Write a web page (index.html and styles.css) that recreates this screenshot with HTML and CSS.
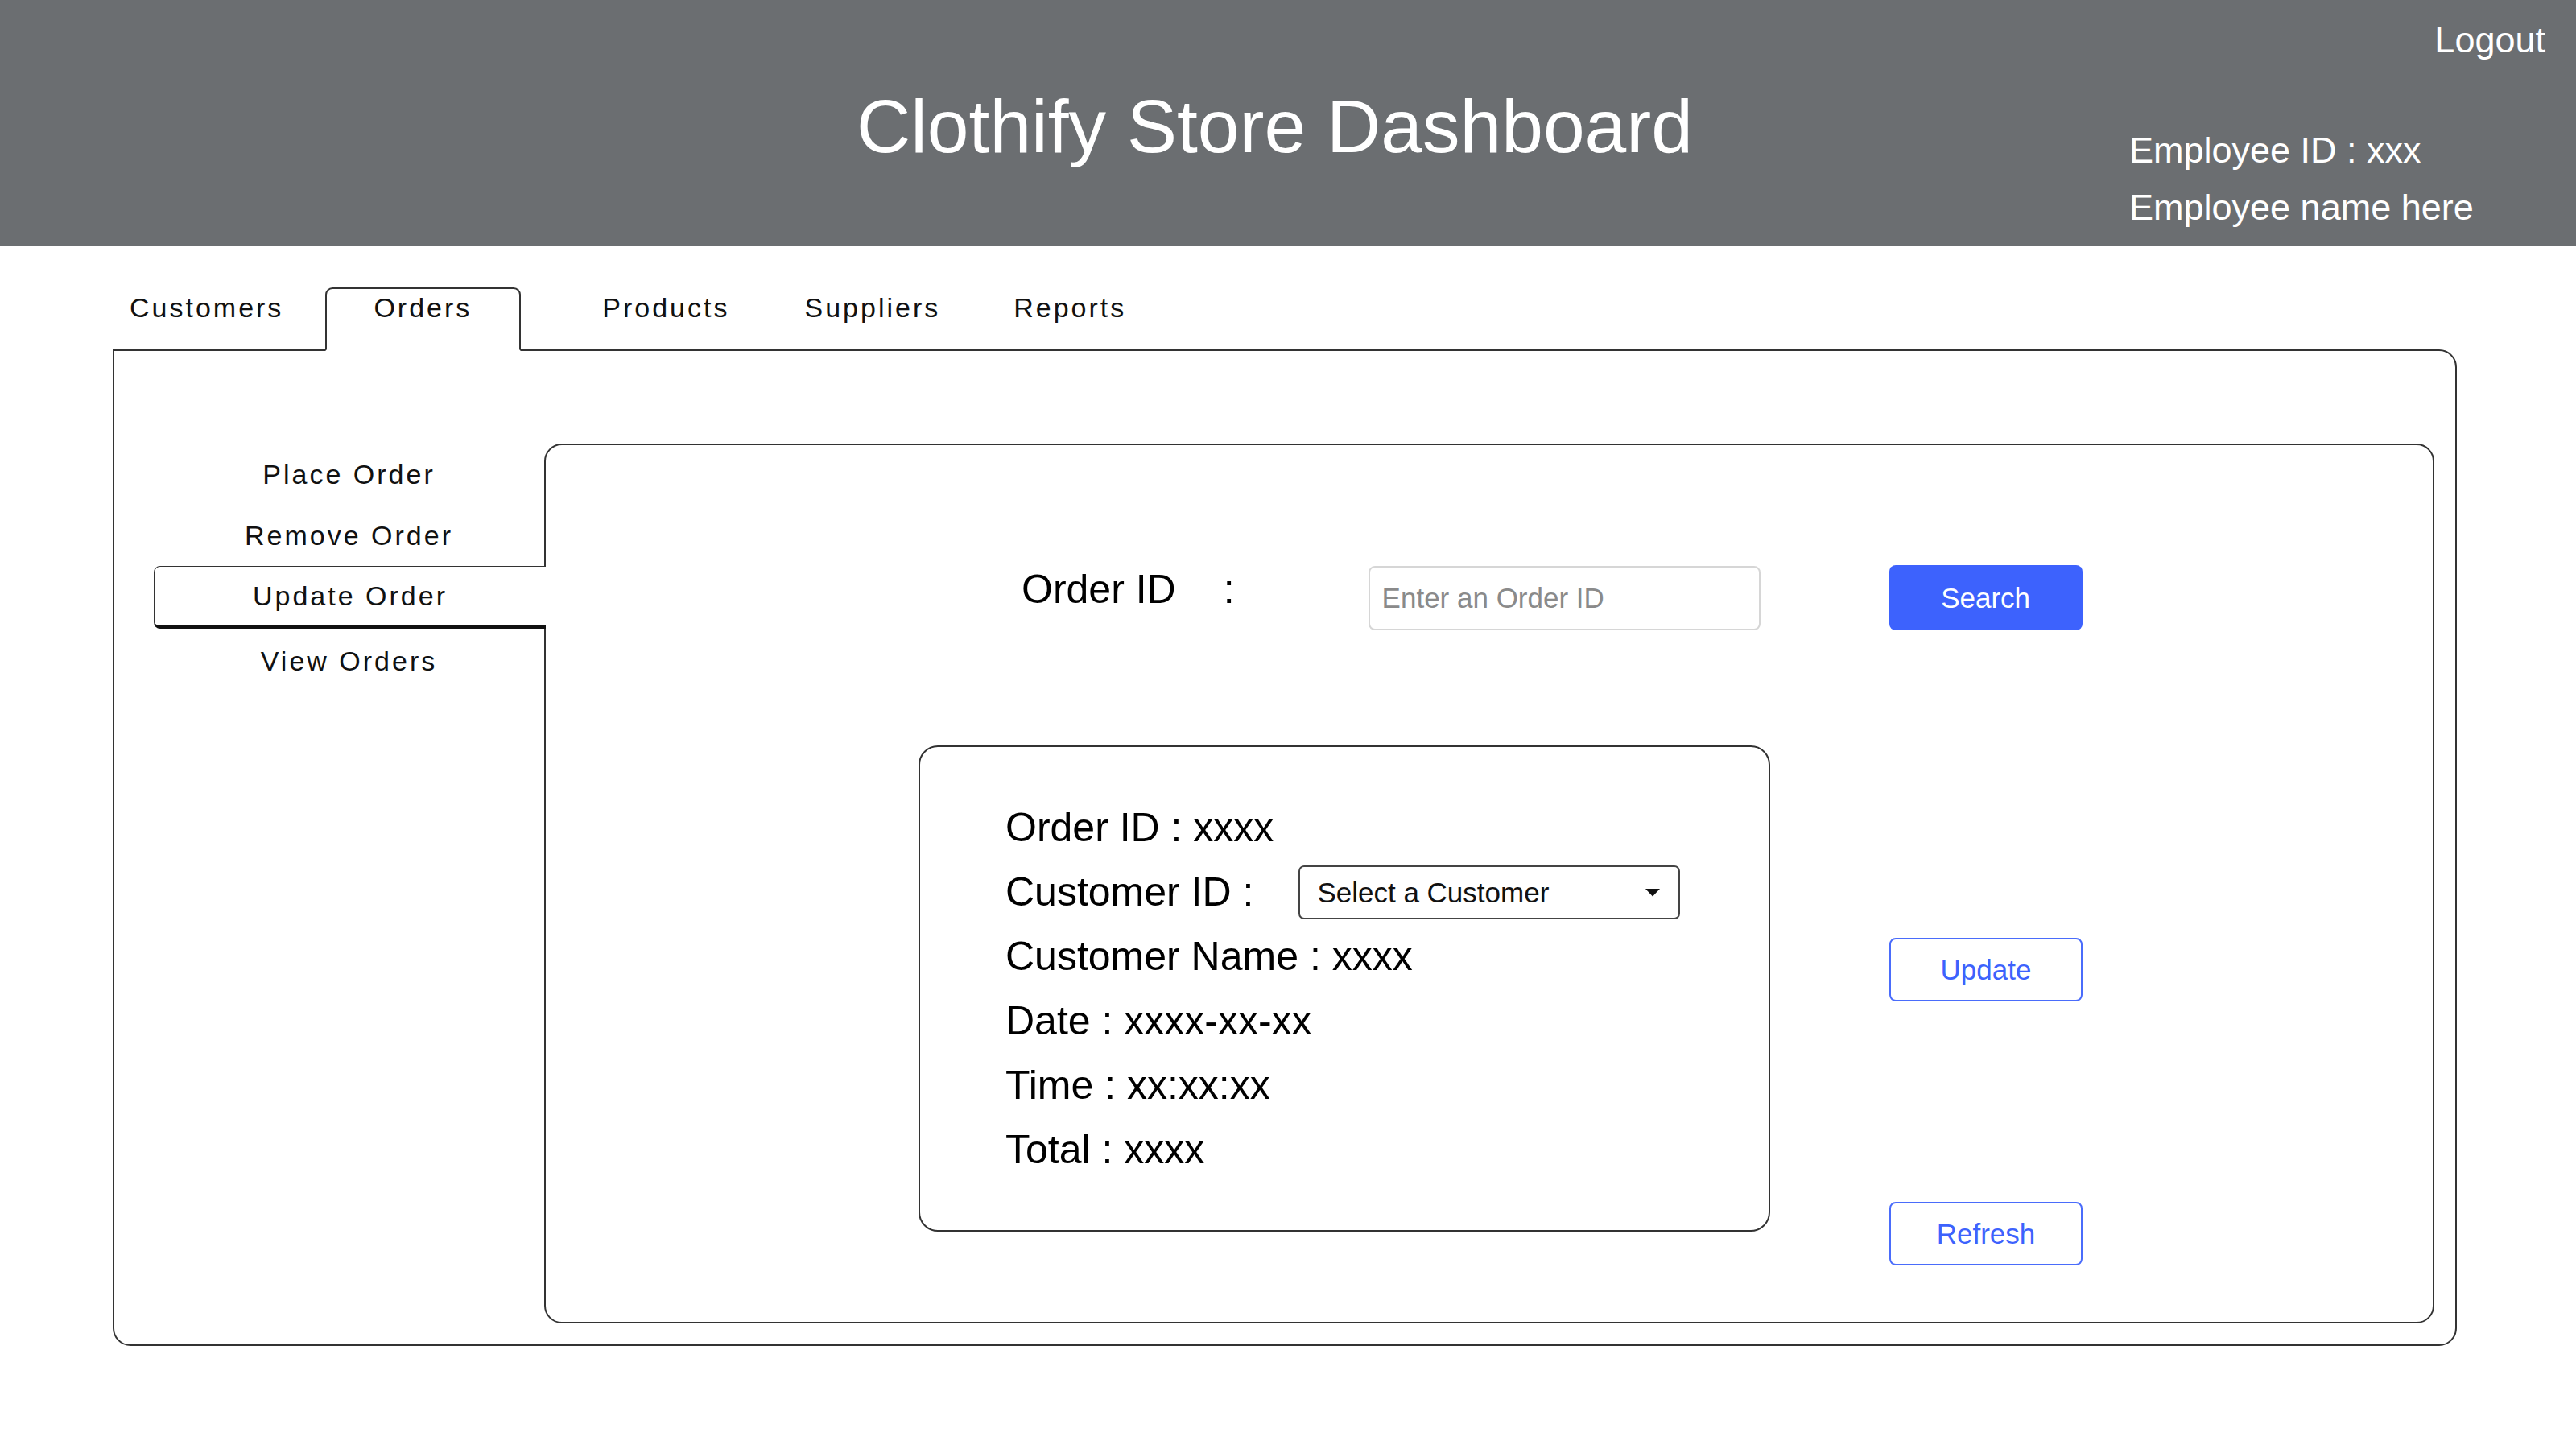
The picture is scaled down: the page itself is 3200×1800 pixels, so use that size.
FILE: index.html
```html
<!DOCTYPE html>
<html lang="en">
<head>
<meta charset="utf-8">
<title>Clothify Store Dashboard</title>
<link rel="stylesheet" href="styles.css">
</head>
<body>
<header class="topbar">
  <h1 class="title">Clothify Store Dashboard</h1>
  <div class="user">
    <a class="logout">Logout</a>
    <div class="emp">
      <div>Employee ID : xxx</div>
      <div>Employee name here</div>
    </div>
  </div>
</header>
<main class="main">
  <nav class="tabs">
    <span class="tab tab-customers">Customers</span>
    <span class="tab tab-orders active">Orders</span>
    <span class="tab tab-products">Products</span>
    <span class="tab tab-suppliers">Suppliers</span>
    <span class="tab tab-reports">Reports</span>
  </nav>
  <section class="panel">
    <aside class="side">
      <div class="side-item">Place Order</div>
      <div class="side-item">Remove Order</div>
      <div class="side-item active">Update Order</div>
      <div class="side-item">View Orders</div>
    </aside>
    <div class="pane">
      <div class="search-row">
        <span class="label">Order ID</span>
        <span class="label colon">:</span>
        <div class="input">Enter an Order ID</div>
        <div class="btn btn-primary">Search</div>
      </div>
      <div class="detail-row">
        <div class="card">
          <div class="line"><span>Order ID : xxxx</span></div>
          <div class="line"><span>Customer ID :</span><div class="select"><span>Select a Customer</span><svg class="caret" width="20" height="11" viewBox="0 0 20 11"><path d="M1 1 L19 1 L10 10.5 Z" fill="#111"/></svg></div></div>
          <div class="line"><span>Customer Name : xxxx</span></div>
          <div class="line"><span>Date : xxxx-xx-xx</span></div>
          <div class="line"><span>Time : xx:xx:xx</span></div>
          <div class="line"><span>Total : xxxx</span></div>
        </div>
        <div class="actions">
          <div class="btn btn-outline btn-update">Update</div>
          <div class="btn btn-outline btn-refresh">Refresh</div>
        </div>
      </div>
    </div>
  </section>
</main>
</body>
</html>
```
FILE: styles.css
```css
* { box-sizing: border-box; }
html, body { margin: 0; padding: 0; background: #fff; }
body {
  font-family: "Liberation Sans", Arial, sans-serif;
  color: #000;
  width: 3200px;
  height: 1800px;
  overflow: hidden;
}

/* Header */
.topbar {
  display: flex;
  align-items: flex-start;
  height: 305px;
  background: #6b6e71;
  color: #fff;
}
.title {
  margin: 111px 0 0 1064px;
  font-size: 93px;
  font-weight: 400;
  line-height: 1;
  white-space: nowrap;
}
.user {
  margin-left: auto;
  margin-right: 38px;
  width: 517px;
  display: flex;
  flex-direction: column;
  padding-top: 27px;
}
.logout {
  align-self: flex-end;
  font-size: 45px;
  line-height: 45px;
  color: #fff;
}
.emp {
  margin-top: 79px;
  font-size: 45px;
  line-height: 71px;
  white-space: nowrap;
}

/* Main */
.main {
  padding: 52px 148px 0 140px;
}
.tabs {
  display: flex;
  align-items: flex-end;
  font-size: 34px;
  letter-spacing: 3px;
  color: #111;
}
.tab {
  display: block;
  line-height: 40px;
  padding: 3px 0 32px;
  border-top: 2px solid transparent;
  white-space: nowrap;
}
.tab-customers { margin-left: 21px; }
.tab-orders { margin-left: 52px; }
.tab-products { margin-left: 101px; }
.tab-suppliers { margin-left: 93px; }
.tab-reports { margin-left: 91px; }
.tab.active {
  position: relative;
  z-index: 1;
  padding: 3px 59px 32px 58px;
  border: 2px solid #333;
  border-bottom: 2px solid #fff;
  border-radius: 9px 9px 0 0;
  margin-bottom: -2px;
  background: #fff;
}

.panel {
  display: flex;
  height: 1238px;
  border: 2px solid #333;
  border-radius: 0 22px 22px 22px;
  padding: 115px 26px 26px 49px;
}

/* Sidebar */
.side {
  width: 485px;
  flex: none;
  font-size: 34px;
  letter-spacing: 3px;
  color: #111;
  align-self: flex-start;
}
.side-item {
  height: 76px;
  line-height: 76px;
  text-align: center;
  white-space: nowrap;
}
.side-item.active {
  position: relative;
  z-index: 1;
  height: 78px;
  line-height: 73px;
  margin-right: -2px;
  background: #fff;
  border-top: 1px solid #333;
  border-left: 1px solid #333;
  border-bottom: 4px solid #111;
  border-radius: 8px 0 0 8px;
}
.side-item.active + .side-item { line-height: 80px; }

/* Content pane */
.pane {
  flex: 1;
  border: 2px solid #333;
  border-radius: 22px;
  padding-top: 149px;
}
.search-row {
  display: flex;
  align-items: flex-start;
}
.label {
  font-size: 50px;
  line-height: 50px;
  margin-top: 5px;
  margin-left: 591px;
  white-space: nowrap;
}
.label.colon { margin-left: 59px; }
.input {
  margin-left: 166px;
  margin-top: 1px;
  width: 487px;
  height: 80px;
  border: 2px solid #d6d6d6;
  border-radius: 8px;
  padding-left: 15px;
  font-size: 35px;
  line-height: 76px;
  color: #8a8a8a;
  white-space: nowrap;
}
.btn {
  width: 240px;
  height: 81px;
  border-radius: 8px;
  font-size: 35px;
  display: flex;
  align-items: center;
  justify-content: center;
}
.btn-primary {
  margin-left: 160px;
  background: #3d62fd;
  color: #fff;
}
.detail-row {
  display: flex;
  align-items: flex-start;
  margin-top: 143px;
}
.card {
  margin-left: 463px;
  width: 1058px;
  height: 604px;
  border: 2px solid #333;
  border-radius: 24px;
  padding: 60px 0 0 106px;
  font-size: 50px;
}
.line {
  height: 80px;
  line-height: 80px;
  display: flex;
  align-items: center;
  white-space: nowrap;
}
.select {
  margin-left: 56px;
  width: 474px;
  height: 67px;
  border: 2px solid #444;
  border-radius: 7px;
  display: flex;
  align-items: center;
  justify-content: space-between;
  padding: 0 22px 0 21px;
  font-size: 35px;
  line-height: 1;
  color: #111;
}
.caret { display: block; }
.actions {
  margin-left: 148px;
  display: flex;
  flex-direction: column;
}
.btn-outline {
  height: 79px;
  border: 2px solid #4a6cfb;
  color: #3d62fd;
  background: #fff;
}
.btn-update { margin-top: 239px; }
.btn-refresh { margin-top: 249px; }
```
